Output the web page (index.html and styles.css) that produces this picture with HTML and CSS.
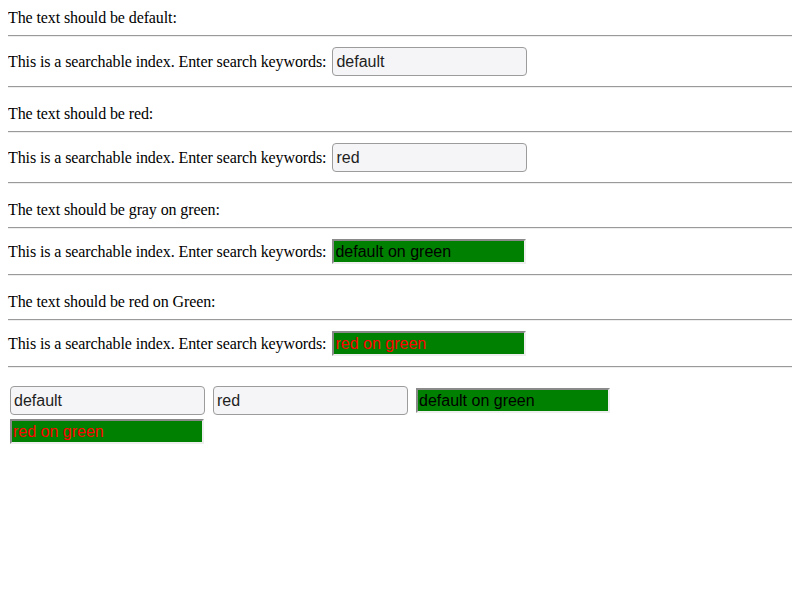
FILE: index.html
```html
<!DOCTYPE html>
<html>
<head>
<meta charset="utf-8">
<link rel="stylesheet" href="styles.css">
</head>
<body>
<div class="note">The text should be default:</div>
<hr>
<div class="row"><span class="label">This is a searchable index. Enter search keywords:</span><input class="field plain" value="default"></div>
<hr>
<div class="note later">The text should be red:</div>
<hr>
<div class="row"><span class="label">This is a searchable index. Enter search keywords:</span><input class="field plain" value="red"></div>
<hr>
<div class="note later">The text should be gray on green:</div>
<hr>
<div class="row"><span class="label">This is a searchable index. Enter search keywords:</span><input class="field green" value="default on green"></div>
<hr>
<div class="note later">The text should be red on Green:</div>
<hr>
<div class="row"><span class="label">This is a searchable index. Enter search keywords:</span><input class="field green red-text" value="red on green"></div>
<hr>
<div class="group">
<input class="field plain" value="default">
<input class="field plain" value="red">
<input class="field green" value="default on green">
<input class="field green red-text" value="red on green">
</div>
</body>
</html>
```
FILE: styles.css
```css
html, body {
  background: #ffffff;
}
body {
  margin: 8px;
  font-family: "Liberation Serif", "Times New Roman", serif;
  font-size: 16px;
  letter-spacing: -0.1px;
  color: #000000;
}
.note {
  line-height: 18px;
  padding-top: 1px;
}
.note.later {
  padding-top: 9px;
}
hr {
  margin: 8px 0;
  height: 0;
  border: 0;
  border-top: 1px solid #9a9a9a;
  border-bottom: 1px solid #eeeeee;
}
.row {
  display: flex;
  align-items: center;
  gap: 6px;
  padding: 2px 0;
}
.label {
  line-height: 18px;
}
.field {
  box-sizing: border-box;
  margin: 0;
  font-family: "Liberation Sans", Arial, sans-serif;
  font-size: 16px;
  letter-spacing: 0;
  outline: none;
}
.plain {
  width: 195px;
  height: 29px;
  border: 1px solid #9c9c9c;
  border-radius: 4px;
  background: #f5f5f7;
  color: #1e1e1e;
  padding: 1px 3px 0;
}
.green {
  width: 194px;
  height: 25px;
  border: 2px solid;
  border-color: #8a8a8a #eeeeee #eeeeee #8a8a8a;
  background: #008000;
  color: #000000;
  padding: 0 1px;
  border-radius: 0;
}
.red-text {
  color: #ff0000;
}
.group {
  display: flex;
  flex-wrap: wrap;
  align-items: center;
  column-gap: 8px;
  row-gap: 4px;
  margin: 18px 0 0 2px;
  width: 790px;
}
```
